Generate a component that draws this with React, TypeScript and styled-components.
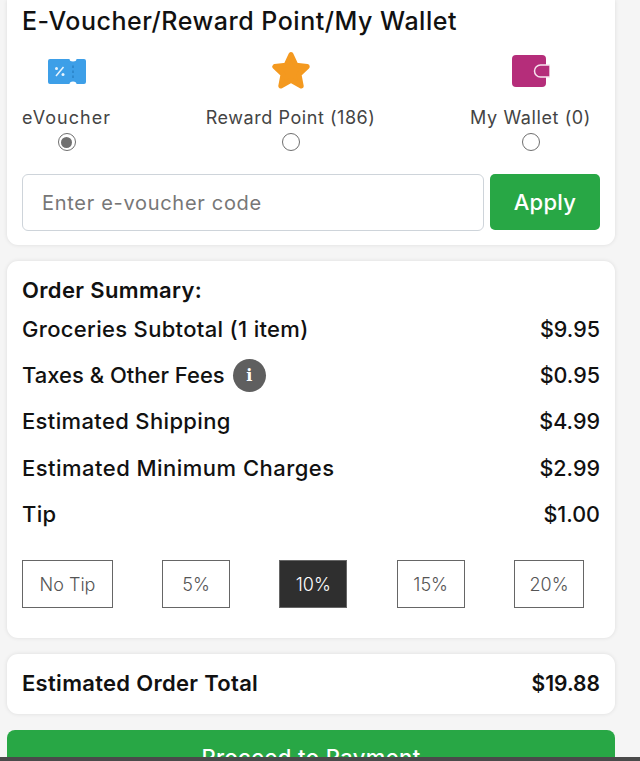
import { createGlobalStyle } from 'styled-components'
import styled from 'styled-components'

const GlobalStyle = createGlobalStyle`
html, body {
  margin: 0;
  padding: 0;
  height: 761px;
  overflow: hidden;
  background: #f5f5f5;
  font-family: Inter, "Liberation Sans", sans-serif;
}
`

const options = [
    { label: 'eVoucher', icon: 'voucher', checked: true, spacing: 1.05 },
    { label: 'Reward Point (186)', icon: 'star', checked: false, spacing: 0.55 },
    { label: 'My Wallet (0)', icon: 'wallet', checked: false, spacing: 0.6 },
]

const rows = [
    { label: 'Groceries Subtotal (1 item)', value: '$9.95', spacing: 0.32 },
    { label: 'Taxes & Other Fees', value: '$0.95', info: true, spacing: 0 },
    { label: 'Estimated Shipping', value: '$4.99', spacing: 0.35 },
    { label: 'Estimated Minimum Charges', value: '$2.99', spacing: 0.47 },
    { label: 'Tip', value: '$1.00', spacing: 0.35 },
]

const tips = [
    { label: 'No Tip', width: 91 },
    { label: '5%', width: 67.5 },
    { label: '10%', width: 68, active: true },
    { label: '15%', width: 68 },
    { label: '20%', width: 70 },
]

const VoucherIcon = () => (
    <svg width="38" height="25" viewBox="0 0 38 25">
        <path
            d="M2 0H21.5a3.5 2.5 0 0 0 7 0H36a2 2 0 0 1 2 2V23a2 2 0 0 1-2 2H28.5a3.5 2.5 0 0 0-7 0H2a2 2 0 0 1-2-2V2a2 2 0 0 1 2-2Z"
            fill="#3d9fe8"
        />
        <path d="M25 6.5v2.5M25 11.5v2.5M25 16.5v2.5" stroke="#2b84c9" strokeWidth="1.6" />
        <path d="M8 17L15.5 8" stroke="#e8f4fd" strokeWidth="1.5" />
        <circle cx="8.5" cy="9.5" r="1.5" fill="#e8f4fd" />
        <circle cx="15" cy="15.5" r="1.5" fill="#e8f4fd" />
    </svg>
)

const StarIcon = () => (
    <svg width="38" height="40" viewBox="0 0 38 40">
        <path
            d="M19 3.5L24 14.2L35.2 15.6L27 23.4L29.2 35L19 29.3L8.8 35L11 23.4L2.8 15.6L14 14.2Z"
            fill="#f4991f"
            stroke="#f4991f"
            strokeWidth="5"
            strokeLinejoin="round"
        />
    </svg>
)

const WalletIcon = () => (
    <svg width="38" height="32" viewBox="0 0 38 32">
        <rect width="34" height="32" rx="4" fill="#b52d7a" />
        <path d="M38 10H28.5a6 6 0 0 0 0 12H38Z" fill="#b52d7a" stroke="#f6e3ee" strokeWidth="1.5" />
    </svg>
)

const icons: Record<string, React.ReactNode> = {
    voucher: <VoucherIcon />,
    star: <StarIcon />,
    wallet: <WalletIcon />,
}

const App = () => {
    return (
        <Page>
            <GlobalStyle />
            <TopCard>
                <Title>E-Voucher/Reward Point/My Wallet</Title>
                <Options>
                    {options.map((o) => (
                        <Option key={o.label}>
                            <IconBox>{icons[o.icon]}</IconBox>
                            <OptionLabel $spacing={o.spacing}>{o.label}</OptionLabel>
                            <Radio type="radio" name="pay" defaultChecked={o.checked} />
                        </Option>
                    ))}
                </Options>
                <CodeRow>
                    <CodeInput placeholder="Enter e-voucher code" />
                    <ApplyButton>Apply</ApplyButton>
                </CodeRow>
            </TopCard>

            <SummaryCard>
                <SummaryTitle>Order Summary:</SummaryTitle>
                <Rows>
                    {rows.map((r) => (
                        <Row key={r.label}>
                            <RowLabel $spacing={r.spacing}>
                                {r.label}
                                {r.info && <InfoBadge>i</InfoBadge>}
                            </RowLabel>
                            <RowValue>{r.value}</RowValue>
                        </Row>
                    ))}
                </Rows>
                <Tips>
                    {tips.map((t) => (
                        <TipButton key={t.label} $width={t.width} $active={t.active}>
                            {t.label}
                        </TipButton>
                    ))}
                </Tips>
            </SummaryCard>

            <TotalCard>
                <TotalLabel>Estimated Order Total</TotalLabel>
                <TotalValue>$19.88</TotalValue>
            </TotalCard>

            <ProceedButton>Proceed to Payment</ProceedButton>
            <BottomStrip />
        </Page>
    )
}

export default App

const Page = styled.div`
height: 761px;
overflow: hidden;
padding: 0 25px 0 7px;
box-sizing: border-box;
display: flex;
flex-direction: column;
`

const TopCard = styled.div`
height: 245px;
flex-shrink: 0;
box-sizing: border-box;
padding: 5px 15px 0;
background: #fff;
border-radius: 0 0 11px 11px;
box-shadow: 0 0 4px rgba(0, 0, 0, 0.1);
`

const Title = styled.div`
font-size: 25px;
line-height: 32px;
font-weight: 500;
letter-spacing: 0.52px;
color: #111;
`

const Options = styled.div`
display: flex;
justify-content: space-between;
margin: 13px 9px 0 0;
`

const Option = styled.div`
display: flex;
flex-direction: column;
align-items: center;
`

const IconBox = styled.div`
height: 42px;
display: flex;
align-items: center;
justify-content: center;
`

const OptionLabel = styled.div<{ $spacing: number }>`
margin-top: 14px;
font-size: 18px;
line-height: 24px;
letter-spacing: ${(p) => p.$spacing}px;
color: #444;
`

const Radio = styled.input`
appearance: none;
width: 18px;
height: 18px;
margin: 3px 0 0;
box-sizing: border-box;
border: 1.5px solid #6f6f6f;
border-radius: 50%;
background: #fff;
display: flex;
align-items: center;
justify-content: center;

&:checked::before {
  content: '';
  width: 11px;
  height: 11px;
  border-radius: 50%;
  background: #6f6f6f;
}
`

const CodeRow = styled.div`
display: flex;
gap: 6px;
margin-top: 23px;
`

const CodeInput = styled.input`
flex: 1;
min-width: 0;
height: 57px;
box-sizing: border-box;
padding: 0 19px;
border: 1px solid #ced4da;
border-radius: 6px;
font-family: inherit;
font-size: 20px;
letter-spacing: 0.7px;
color: #333;
outline: none;

&::placeholder {
  color: #777;
}
`

const ApplyButton = styled.button`
width: 110px;
height: 56px;
border: none;
border-radius: 5px;
background: #28a745;
color: #fff;
font-family: inherit;
font-size: 22px;
font-weight: 500;
letter-spacing: 0.3px;
`

const SummaryCard = styled.div`
height: 377px;
flex-shrink: 0;
box-sizing: border-box;
margin-top: 16px;
padding: 15px 15px 0;
background: #fff;
border-radius: 11px;
box-shadow: 0 0 4px rgba(0, 0, 0, 0.1);
`

const SummaryTitle = styled.div`
font-size: 22px;
line-height: 28px;
font-weight: 600;
letter-spacing: 0.35px;
color: #111;
`

const Rows = styled.div`
margin-top: 2px;
`

const Row = styled.div`
height: 46.2px;
display: flex;
align-items: center;
justify-content: space-between;
color: #111;
font-size: 22px;
font-weight: 500;
`

const RowLabel = styled.div<{ $spacing: number }>`
display: flex;
align-items: center;
gap: 8px;
letter-spacing: ${(p) => p.$spacing}px;
`

const RowValue = styled.div`
font-size: 21.5px;
`

const InfoBadge = styled.span`
width: 33px;
height: 33px;
border-radius: 50%;
background: #5f5f5f;
color: #fff;
display: flex;
align-items: center;
justify-content: center;
font-family: "DejaVu Serif", serif;
font-size: 16px;
font-weight: 700;
`

const Tips = styled.div`
display: flex;
gap: 49.4px;
margin-top: 23px;
`

const TipButton = styled.div<{ $width: number; $active?: boolean }>`
width: ${(p) => p.$width}px;
height: 48.5px;
box-sizing: border-box;
border: 1.3px solid #666;
display: flex;
align-items: center;
justify-content: center;
font-size: 18px;
font-weight: 300;
background: ${(p) => (p.$active ? '#2f2f2f' : '#fff')};
color: ${(p) => (p.$active ? '#fff' : '#555')};
`

const TotalCard = styled.div`
height: 60px;
flex-shrink: 0;
box-sizing: border-box;
margin-top: 16px;
padding: 0 15px 2px;
background: #fff;
border-radius: 11px;
box-shadow: 0 0 4px rgba(0, 0, 0, 0.1);
display: flex;
align-items: center;
justify-content: space-between;
`

const TotalLabel = styled.div`
font-size: 22px;
font-weight: 600;
letter-spacing: 0.3px;
color: #111;
`

const TotalValue = styled.div`
font-size: 21px;
font-weight: 600;
color: #111;
`

const ProceedButton = styled.button`
height: 58px;
flex-shrink: 0;
margin-top: 16px;
padding: 0 0 4px;
border: none;
border-radius: 8px;
background: #28a745;
color: #fff;
font-family: inherit;
font-size: 22px;
font-weight: 500;
letter-spacing: 0.4px;
`

const BottomStrip = styled.div`
position: fixed;
left: 0;
right: 0;
bottom: 0;
height: 4px;
background: #4a4a4a;
`
